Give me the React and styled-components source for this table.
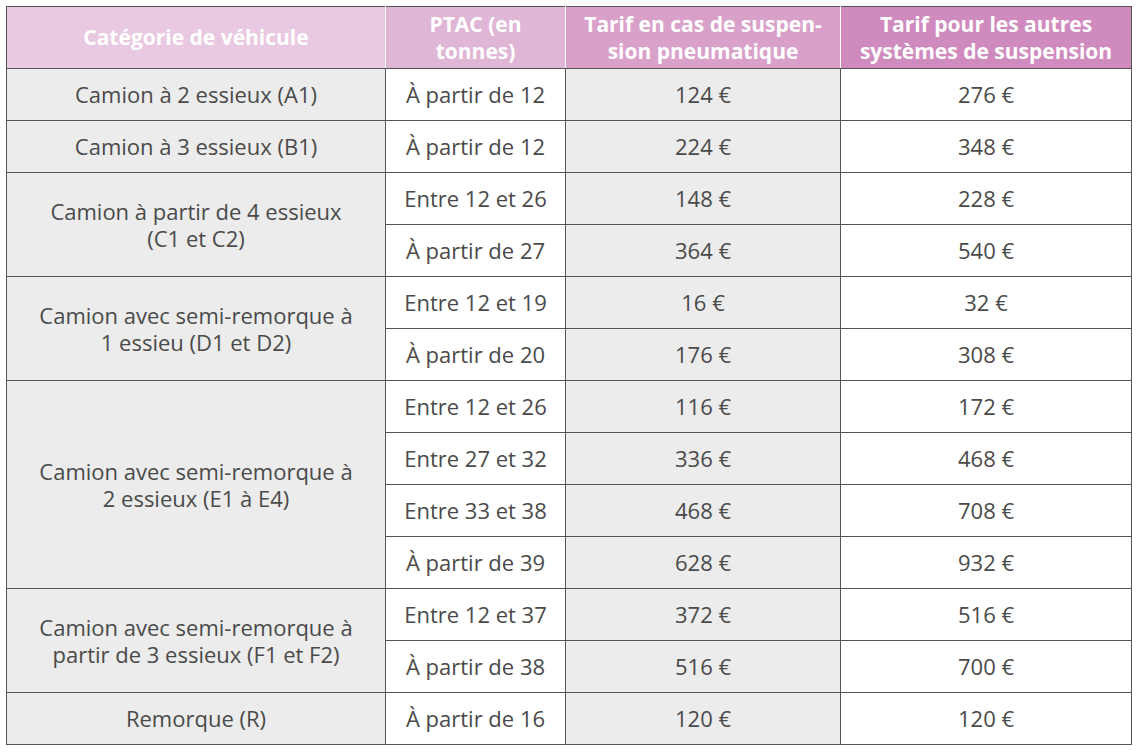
import React from 'react';
import styled, {createGlobalStyle} from 'styled-components';

const GlobalStyle = createGlobalStyle`
    body {
        margin: 0;
        background: #fff;
        font-family: "Open Sans", "Liberation Sans", sans-serif;
    }
`

const Page = styled.div`
    padding: 6px 0 0 6px;
`

const Table = styled.table`
    border-collapse: collapse;
    table-layout: fixed;
    width: 1125px;
    border-top: 1px solid #555;
    color: #4a4a4a;
    font-size: 22px;
`

const Head = styled.th`
    background: ${p => p.bg};
    color: #fff;
    font-weight: 700;
    font-size: 21px;
    line-height: 27px;
    height: 61px;
    padding: 0 12px;
    text-align: center;
    border-left: 1px solid #fff;
    border-bottom: 1px solid #555;
    &:first-child { border-left: 1px solid #555; }
    &:last-child { border-right: 1px solid #555; }
`

const Cell = styled.td`
    background: ${p => (p.gray ? '#ececec' : '#fff')};
    border: 1px solid #555;
    text-align: center;
    height: 51px;
    padding: 0 ${p => (p.wide ? '25px' : '4px')};
    white-space: ${p => (p.wide ? 'normal' : 'nowrap')};
    line-height: 27px;
`

const headers = [
    {label: 'Catégorie de véhicule', bg: '#e9c9e1', w: 379},
    {label: 'PTAC (en tonnes)', bg: '#e0b6d6', w: 180},
    {label: 'Tarif en cas de suspen\u00adsion pneumatique', bg: '#d9a1c9', w: 275},
    {label: 'Tarif pour les autres systèmes de suspension', bg: '#d08bbe', w: 291},
]

const groups = [
    {name: 'Camion à 2 essieux (A1)', rows: [['À partir de 12', '124 €', '276 €']]},
    {name: 'Camion à 3 essieux (B1)', rows: [['À partir de 12', '224 €', '348 €']]},
    {name: 'Camion à partir de 4 essieux (C1 et C2)', rows: [
        ['Entre 12 et 26', '148 €', '228 €'],
        ['À partir de 27', '364 €', '540 €'],
    ]},
    {name: 'Camion avec semi-remorque à 1 essieu (D1 et D2)', rows: [
        ['Entre 12 et 19', '16 €', '32 €'],
        ['À partir de 20', '176 €', '308 €'],
    ]},
    {name: 'Camion avec semi-remorque à 2 essieux (E1 à E4)', rows: [
        ['Entre 12 et 26', '116 €', '172 €'],
        ['Entre 27 et 32', '336 €', '468 €'],
        ['Entre 33 et 38', '468 €', '708 €'],
        ['À partir de 39', '628 €', '932 €'],
    ]},
    {name: 'Camion avec semi-remorque à partir de 3 essieux (F1 et F2)', rows: [
        ['Entre 12 et 37', '372 €', '516 €'],
        ['À partir de 38', '516 €', '700 €'],
    ]},
    {name: 'Remorque (R)', rows: [['À partir de 16', '120 €', '120 €']]},
]

export default function App() {
    return (
        <Page>
            <GlobalStyle />
            <Table>
                <colgroup>
                    {headers.map(h => <col key={h.label} style={{width: h.w}} />)}
                </colgroup>
                <thead>
                    <tr>
                        {headers.map(h => <Head key={h.label} bg={h.bg}>{h.label}</Head>)}
                    </tr>
                </thead>
                <tbody>
                    {groups.map(g => g.rows.map((r, i) => (
                        <tr key={g.name + i}>
                            {i === 0 && <Cell gray wide rowSpan={g.rows.length}>{g.name}</Cell>}
                            <Cell>{r[0]}</Cell>
                            <Cell gray>{r[1]}</Cell>
                            <Cell>{r[2]}</Cell>
                        </tr>
                    )))}
                </tbody>
            </Table>
        </Page>
    );
}
